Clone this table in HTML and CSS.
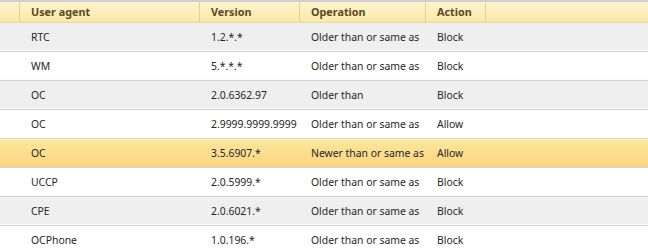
FILE: index.html
```html
<!DOCTYPE html>
<html>
<head>
<meta charset="utf-8">
<link rel="stylesheet" href="styles.css">
</head>
<body>
<div class="grid">
  <div class="row head">
    <div class="c c0"></div>
    <div class="c c1">User agent</div>
    <div class="c c2">Version</div>
    <div class="c c3">Operation</div>
    <div class="c c4">Action</div>
    <div class="c c5"></div>
  </div>
  <div class="row alt"><div class="c c0"></div><div class="c c1">RTC</div><div class="c c2">1.2.*.*</div><div class="c c3">Older than or same as</div><div class="c c4">Block</div><div class="c c5"></div></div>
  <div class="row"><div class="c c0"></div><div class="c c1">WM</div><div class="c c2">5.*.*.*</div><div class="c c3">Older than or same as</div><div class="c c4">Block</div><div class="c c5"></div></div>
  <div class="row alt"><div class="c c0"></div><div class="c c1">OC</div><div class="c c2">2.0.6362.97</div><div class="c c3">Older than</div><div class="c c4">Block</div><div class="c c5"></div></div>
  <div class="row"><div class="c c0"></div><div class="c c1">OC</div><div class="c c2">2.9999.9999.9999</div><div class="c c3">Older than or same as</div><div class="c c4">Allow</div><div class="c c5"></div></div>
  <div class="row sel"><div class="c c0"></div><div class="c c1">OC</div><div class="c c2">3.5.6907.*</div><div class="c c3">Newer than or same as</div><div class="c c4">Allow</div><div class="c c5"></div></div>
  <div class="row"><div class="c c0"></div><div class="c c1">UCCP</div><div class="c c2">2.0.5999.*</div><div class="c c3">Older than or same as</div><div class="c c4">Block</div><div class="c c5"></div></div>
  <div class="row alt"><div class="c c0"></div><div class="c c1">CPE</div><div class="c c2">2.0.6021.*</div><div class="c c3">Older than or same as</div><div class="c c4">Block</div><div class="c c5"></div></div>
  <div class="row"><div class="c c0"></div><div class="c c1">OCPhone</div><div class="c c2">1.0.196.*</div><div class="c c3">Older than or same as</div><div class="c c4">Block</div><div class="c c5"></div></div>
</div>
</body>
</html>
```
FILE: styles.css
```css
html, body { margin: 0; padding: 0; background: #fff; }
body { font-family: "Noto Sans", "DejaVu Sans", sans-serif; font-size: 10.4px; color: #262626; }
.grid { width: 648px; display: flex; flex-direction: column; }
.row { display: grid; grid-template-columns: 20px 180px 100px 126px 60px 1fr; height: 28px; align-items: center; border-bottom: 1px solid #d2d2d2; box-shadow: inset 0 -1px 0 #fafafa; }
.row.alt { background: #efefef; }
.row.sel { background: linear-gradient(#fbe79a, #fdd583); box-shadow: inset 0 1px 0 #fff3c8; }
.c { padding-left: 11px; white-space: nowrap; }
.c0, .c5 { padding: 0; }
.head { height: 20px; border-top: 2px solid #cfcfcf; border-bottom: 1px solid #e8d9a0; background: linear-gradient(#fdf3cd, #fbe9ab); font-weight: bold; color: #5b4a20; box-shadow: none; font-size: 10.8px; }
.head .c { height: 20px; line-height: 20px; border-right: 1px solid #e2d196; }
.head .c5 { border-right: none; }
```
